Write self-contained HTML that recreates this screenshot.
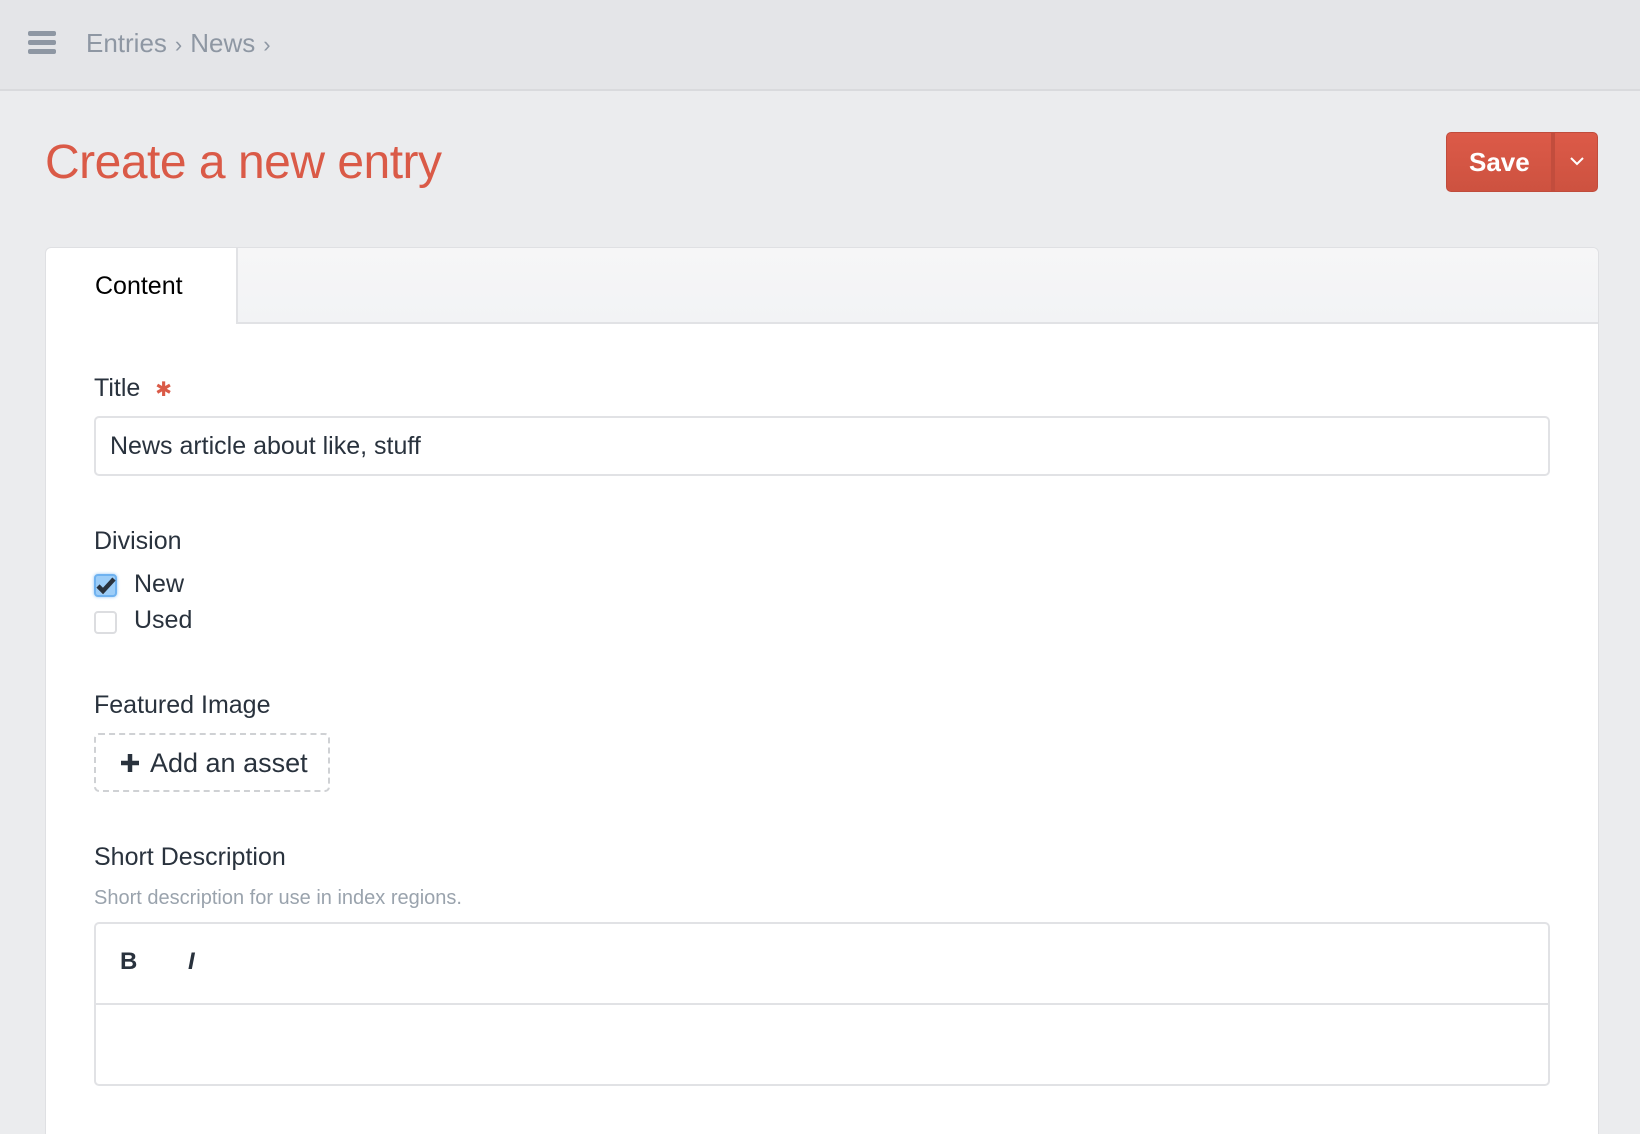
<!DOCTYPE html>
<html style="width:1640px;height:1134px;overflow:hidden"><head><style>
*{box-sizing:border-box;margin:0;padding:0}
body{width:1640px;height:1134px;overflow:hidden;background:#ebecee;font-family:"Liberation Sans",Arial,sans-serif;color:#29323d;position:relative}
.hdr{position:absolute;left:0;top:0;width:1640px;height:91px;background:#e4e5e8;border-bottom:2px solid #d9dadd}
.ham{position:absolute;left:28px;width:28px;height:5px;background:#8e97a3;border-radius:2px}
.bc{position:absolute;left:86px;top:28px;font-size:26px;color:#8e97a3}
.bc span{font-size:22px;margin:0 8px}
h1{position:absolute;left:45px;top:135px;font-size:48px;font-weight:normal;color:#da5a47;letter-spacing:-0.5px}
.save{position:absolute;left:1446px;top:132px;width:152px;height:60px;background:linear-gradient(#dc5a48,#cd5240);border:1px solid #c04c3c;border-radius:5px;color:#fff;font-size:26px;font-weight:bold}
.save .t{position:absolute;left:22px;top:14px}
.save .d{position:absolute;left:104px;top:0;width:4px;height:58px;background:#c24d3d}
.panel{position:absolute;left:45px;top:247px;width:1554px;height:887px;background:#fff;border:1px solid #dfe0e3;border-bottom:none;border-radius:6px 6px 0 0}
.tabbar{position:absolute;left:190px;top:0;right:0;height:76px;background:linear-gradient(#f6f6f7,#f2f3f5);border-left:2px solid #e1e2e5;border-bottom:2px solid #e1e2e5;border-top-right-radius:6px}
.tab{position:absolute;left:49px;top:24px;font-size:25px;color:#000}
.lbl{position:absolute;left:94px;font-size:25px;color:#29323d}
.inp{position:absolute;left:94px;width:1456px;border:2px solid #e1e2e5;border-radius:5px;background:#fff}
.cb{position:absolute;left:94px;width:23px;height:23px;border:2px solid #dcdde0;border-radius:4px;background:#fff}
</style></head><body>
<div class="hdr">
<div class="ham" style="top:31px"></div><div class="ham" style="top:40px"></div><div class="ham" style="top:49px"></div>
<div class="bc">Entries<span>›</span>News<span>›</span></div>
</div>
<h1>Create a new entry</h1>
<div class="save"><span class="t">Save</span><div class="d"></div>
<svg style="position:absolute;left:122px;top:22px" width="16" height="12" viewBox="0 0 16 12"><path d="M2 3l6 6 6-6" stroke="#fff" stroke-width="2" fill="none"/></svg></div>
<div class="panel"><div class="tabbar"></div><div class="tab">Content</div></div>
<div class="lbl" style="top:374px">Title <span style="color:#da5a47;font-size:20px;margin-left:8px">✱</span></div>
<div class="inp" style="top:416px;height:60px"><div style="position:absolute;left:14px;top:14px;font-size:25px">News article about like, stuff</div></div>
<div class="lbl" style="top:527px">Division</div>
<div class="cb" style="top:574px;background:#9ccdf8;border-color:#6fb2f0;box-shadow:0 0 3px #8ec4f5"><svg style="position:absolute;left:-1px;top:-1px" width="22" height="22" viewBox="0 0 22 22"><path d="M3 11l5 5 11-12" stroke="#29323d" stroke-width="4.5" fill="none"/></svg></div>
<div class="lbl" style="top:570px;left:134px">New</div>
<div class="cb" style="top:611px"></div>
<div class="lbl" style="top:606px;left:134px">Used</div>
<div class="lbl" style="top:691px">Featured Image</div>
<div style="position:absolute;left:94px;top:733px;width:236px;height:59px;border:2px dashed #cfd1d4;border-radius:5px"></div>
<svg style="position:absolute;left:120px;top:753px" width="20" height="20" viewBox="0 0 20 20"><path d="M10 1v18M1 10h18" stroke="#29323d" stroke-width="4.5"/></svg>
<div style="position:absolute;left:150px;top:748px;font-size:27px;color:#29323d">Add an asset</div>
<div class="lbl" style="top:843px">Short Description</div>
<div style="position:absolute;left:94px;top:887px;font-size:20px;color:#9aa3ad">Short description for use in index regions.</div>
<div class="inp" style="top:922px;height:164px"><div style="position:absolute;left:0;right:0;top:79px;border-top:2px solid #e1e2e5"></div>
<div style="position:absolute;left:24px;top:24px;font-size:24px;font-weight:bold">B</div>
<div style="position:absolute;left:92px;top:24px;font-size:24px;font-style:italic;font-weight:bold">I</div></div>
</body></html>
